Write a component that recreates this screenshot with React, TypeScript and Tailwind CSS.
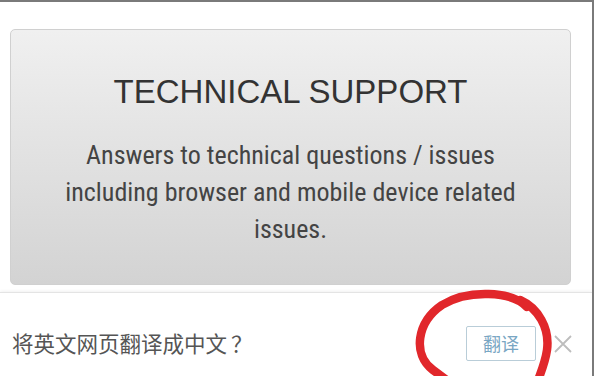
export default function App() {
  return (
    <div className="relative w-[594px] h-[376px] overflow-hidden bg-white border-t-2 border-r-2 border-[#7a7a7a]">
      <div className="px-[10px] pt-[27px] pr-[21px]">
        <div className="h-[256px] rounded-[5px] border border-[#d0d0d0] bg-gradient-to-b from-[#f0f0f0] to-[#d3d3d3] flex flex-col items-center">
          <h2 className="mt-[42px] text-[33px] leading-[40px] text-[#333] font-['Liberation_Sans',Arial,sans-serif]">
            TECHNICAL SUPPORT
          </h2>
          <p className="mt-[25px] w-[470px] text-center text-[26px] leading-[37px] text-[#444] font-['Roboto_Condensed','Liberation_Sans_Narrow',Roboto,sans-serif]">
            Answers to technical questions / issues including browser and mobile device related issues.
          </p>
        </div>
      </div>

      <div className="mt-[7px] h-[84px] bg-white border-t border-[#e4e4e4] shadow-[0_-1px_3px_rgba(0,0,0,0.06)] flex items-center pt-[18px] pl-[12px] pr-[20px]">
        <span className="flex-1 text-[21.5px] text-[#555] font-['Noto_Sans_CJK_SC',sans-serif]">
          将英文网页翻译成中文<span className="inline-block w-[24px] pl-[4px]">？</span>
        </span>
        <button className="w-[70px] h-[35px] border border-[#b9cdd8] rounded-[2px] text-[18px] text-[#79a6c3] font-['Noto_Sans_CJK_SC',sans-serif] flex items-center justify-center">
          翻译
        </button>
        <svg className="ml-[18px]" width="18" height="18" viewBox="0 0 18 18">
          <path d="M1 1 L17 17 M17 1 L1 17" stroke="#bdbdbd" strokeWidth="1.8" />
        </svg>
      </div>

      {/* hand drawn red circle over the translate button */}
      <svg className="absolute left-0 top-0 pointer-events-none" width="594" height="376" viewBox="0 0 594 376">
        <path
          d="M527 305 C512 289 468 287 442 303 C417 320 412 352 433 368 L452 382"
          fill="none"
          stroke="#e1272b"
          strokeWidth="8.5"
          strokeLinecap="round"
        />
        <path
          d="M520 298 C538 306 550 326 547 348 C545 362 540 372 536 384"
          fill="none"
          stroke="#e1272b"
          strokeWidth="8.5"
          strokeLinecap="round"
        />
      </svg>
    </div>
  )
}
